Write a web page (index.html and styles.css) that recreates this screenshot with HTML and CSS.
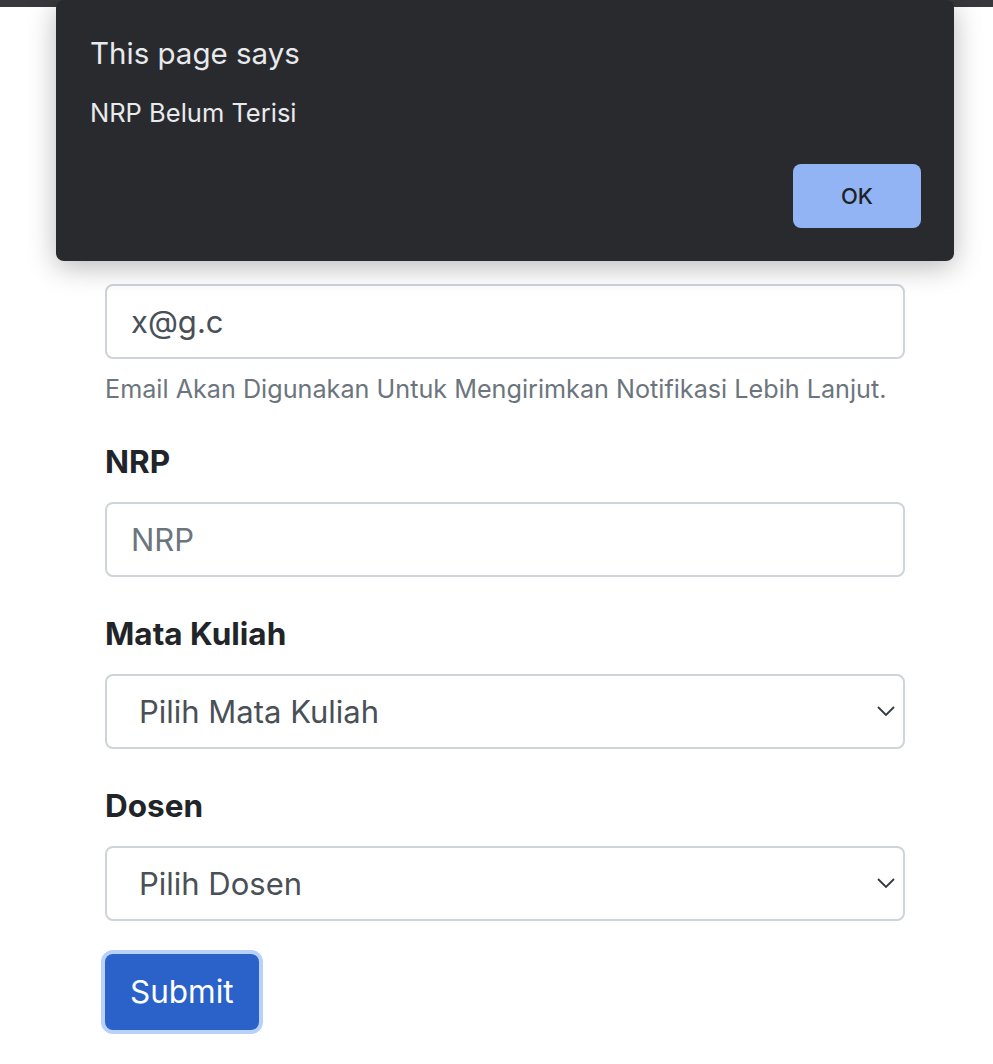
FILE: index.html
```html
<!DOCTYPE html>
<html lang="id">
<head>
<meta charset="utf-8">
<title>Form</title>
<link rel="stylesheet" href="styles.css">
</head>
<body>
<div class="chrome-strip"></div>
<form class="form">
  <div class="group group-email">
    <label class="label" for="email">Email</label>
    <input class="control" id="email" type="email" value="x@g.c">
    <small class="form-text">Email Akan Digunakan Untuk Mengirimkan Notifikasi Lebih Lanjut.</small>
  </div>
  <div class="group">
    <label class="label" for="nrp">NRP</label>
    <input class="control" id="nrp" type="text" placeholder="NRP">
  </div>
  <div class="group">
    <label class="label" for="mk">Mata Kuliah</label>
    <select class="control select" id="mk"><option>Pilih Mata Kuliah</option></select>
  </div>
  <div class="group">
    <label class="label" for="dosen">Dosen</label>
    <select class="control select" id="dosen"><option>Pilih Dosen</option></select>
  </div>
  <button type="button" class="btn-submit">Submit</button>
</form>

<div class="dialog" role="alertdialog">
  <div class="dialog-title">This page says</div>
  <div class="dialog-msg">NRP Belum Terisi</div>
  <div class="dialog-actions">
    <button type="button" class="dialog-ok">OK</button>
  </div>
</div>
</body>
</html>
```
FILE: styles.css
```css
* { box-sizing: border-box; }
html, body { margin: 0; padding: 0; background: #fff; }
body {
  font-family: Inter, "Noto Sans", "Liberation Sans", sans-serif;
  color: #212529;
  position: relative;
  min-height: 1064px;
}
.chrome-strip {
  height: 7px;
  background: #38383b;
}
.form {
  padding: 213px 0 0 105px;
  width: 905px;
}
.group {
  display: flex;
  flex-direction: column;
  margin-bottom: 33px;
}
.group-email { margin-bottom: 29px; }
.label {
  font-size: 31.5px;
  line-height: 48px;
  font-weight: 700;
  margin-bottom: 16px;
  color: #212529;
}
.control {
  display: block;
  width: 800px;
  height: 75px;
  padding: 0 24px;
  font-family: inherit;
  font-size: 31px;
  color: #495057;
  background: #fff;
  border: 2px solid #ced4da;
  border-radius: 8px;
  outline: none;
}
.control::placeholder { color: #6c757d; }
.select {
  -webkit-appearance: none;
  appearance: none;
  padding-left: 32px;
  background-image: url("data:image/svg+xml,%3Csvg xmlns='http://www.w3.org/2000/svg' width='18' height='10' viewBox='0 0 18 10'%3E%3Cpath d='M1 1l8 8 8-8' fill='none' stroke='%23343a40' stroke-width='1.8'/%3E%3C/svg%3E");
  background-repeat: no-repeat;
  background-position: right 8px center;
  background-size: 18px 10px;
}
.form-text {
  display: block;
  margin-top: 12px;
  font-size: 25.2px;
  line-height: 37.5px;
  color: #6c757d;
}
.btn-submit {
  display: block;
  height: 76px;
  padding: 0 25px;
  font-family: inherit;
  font-size: 31.5px;
  color: #fff;
  background: #2a62ca;
  border: none;
  border-radius: 8px;
  box-shadow: 0 0 0 4px #b9d1f8;
}
.dialog {
  position: absolute;
  top: 0;
  left: 56px;
  width: 898px;
  height: 261px;
  background: #292a2d;
  border-radius: 8px;
  box-shadow: 0 6px 28px rgba(0, 0, 0, 0.28);
  padding: 34px 33px 33px 34px;
  color: #e8eaed;
  display: flex;
  flex-direction: column;
}
.dialog-title {
  font-size: 29.5px;
  line-height: 38px;
}
.dialog-msg {
  font-size: 25.5px;
  line-height: 32px;
  margin-top: 25px;
}
.dialog-actions {
  margin-top: auto;
  display: flex;
  justify-content: flex-end;
}
.dialog-ok {
  width: 128px;
  height: 64px;
  font-family: inherit;
  font-size: 22px;
  font-weight: 500;
  color: #202124;
  background: #92b4f4;
  border: none;
  border-radius: 8px;
}
```
